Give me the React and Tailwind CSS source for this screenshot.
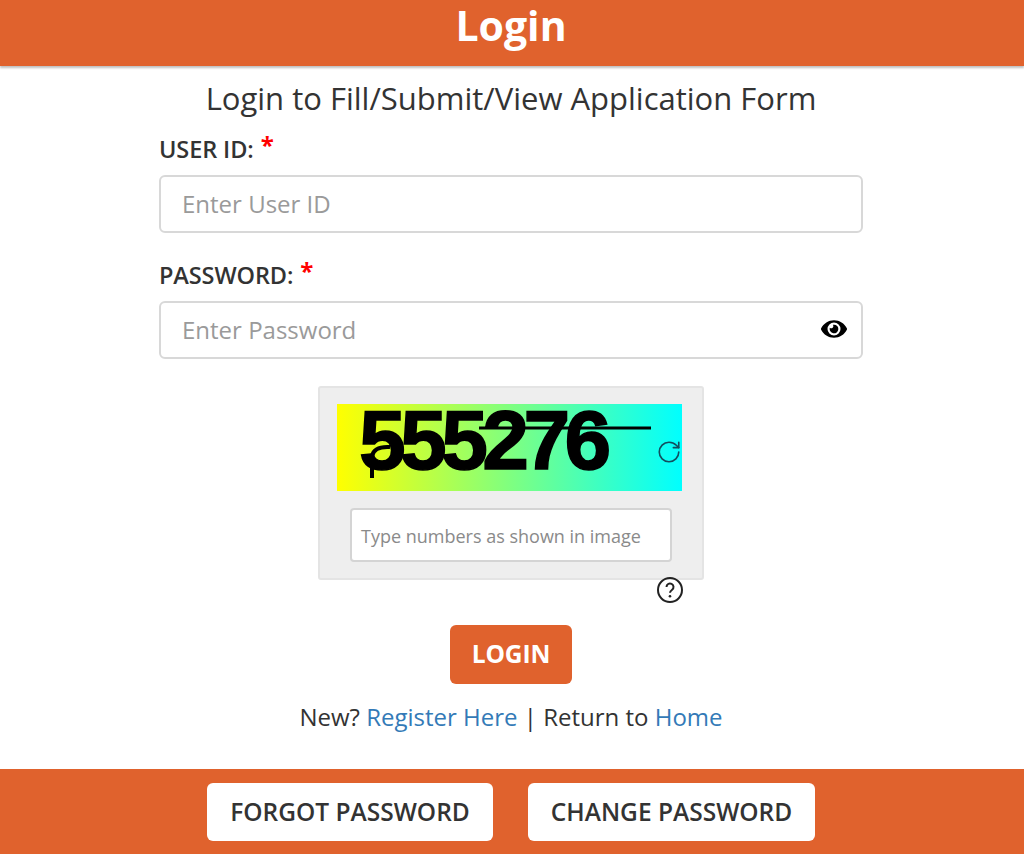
import React from 'react';
import { RotateCw } from 'lucide-react';
import { FaEye } from 'react-icons/fa';

const openSans = { fontFamily: '"Open Sans", sans-serif' };

const Field = ({ label, placeholder, children, className }) => (
  <div className={className}>
    <div className="flex h-[30px] items-center text-[23.5px] font-semibold leading-none tracking-[-0.1px] text-[#333333]">
      {label}:
      <span className="relative top-[-5px] ml-[7px] text-[24px] font-bold text-[#ff0000]">*</span>
    </div>
    <div className="mt-[10px] flex h-[58px] items-center justify-between rounded-[6px] border-2 border-[#d8d8d8] bg-white pl-[21px] pr-[14px] text-[24px] text-[#9a9a9a]">
      <span>{placeholder}</span>
      {children}
    </div>
  </div>
);

export default function App() {
  return (
    <div className="flex h-[854px] w-[1024px] flex-col overflow-hidden bg-white" style={openSans}>
      <header className="flex h-[66px] shrink-0 items-center justify-center bg-[#e0622d] pb-[16px] pr-[2px] shadow-[0_2px_2px_rgba(0,0,0,0.25)]">
        <h1 className="text-[41px] font-bold leading-[50px] text-white">Login</h1>
      </header>

      <main className="flex flex-1 flex-col items-center pr-[2px]">
        <h2 className="mt-[12px] h-[40px] text-[31px] leading-[40px] text-[#333333]">
          Login to Fill/Submit/View Application Form
        </h2>

        <div className="w-[704px]">
          <Field className="mt-[17px]" label="USER ID" placeholder="Enter User ID" />
          <Field className="mt-[28px]" label="PASSWORD" placeholder="Enter Password">
            <FaEye size={26} className="mb-[3px] text-black" />
          </Field>
        </div>

        <section className="mt-[27px] h-[194px] w-[386px] rounded-[3px] border-2 border-[#e4e4e4] bg-[#eeeeee] pl-[17px] pt-[16px]">
          <div className="relative h-[87px] w-[345px] bg-linear-to-r/srgb from-[#ffff00] to-[#00ffff]">
            <span
              className="absolute left-[22px] top-0 text-[84px] font-bold leading-[72px] tracking-[-5.6px] text-black [-webkit-text-stroke:1.5px_black]"
              style={{ fontFamily: '"Liberation Sans", sans-serif' }}
            >
              555276
            </span>
            <svg className="absolute inset-0" width="345" height="87" viewBox="0 0 345 87" fill="none" stroke="black">
              <path d="M142 24 L314 24" strokeWidth="3" />
              <path d="M35 74 L35 52 Q37 42 53 43" strokeWidth="4" />
            </svg>
            <RotateCw size={26} strokeWidth={1.5} className="absolute left-[319px] top-[35px] text-[#134e5e]" />
          </div>
          <div className="ml-[13px] mt-[17px] flex h-[54px] w-[322px] items-center rounded-[4px] border-2 border-[#d4d4d4] bg-white pl-[9px] pt-[3px] text-[18px] text-[#8a8a8a]">
            Type numbers as shown in image
          </div>
        </section>

        <div className="flex h-[24px] w-[704px] justify-end pr-[179px]">
          <svg width="28" height="28" viewBox="0 0 28 28" fill="none" className="mt-[-4px]">
            <circle cx="14" cy="14" r="12" stroke="#222222" strokeWidth="2" />
            <path d="M10.5 11a3.5 3.5 0 1 1 5.6 2.8c-1.2.9-2.1 1.6-2.1 3" stroke="#222222" strokeWidth="2" />
            <circle cx="14" cy="20.3" r="1.3" fill="#222222" />
          </svg>
        </div>

        <button className="mt-[21px] h-[59px] w-[122px] rounded-[6px] bg-[#e0622d] text-[24.5px] font-bold tracking-[-0.1px] text-white">
          LOGIN
        </button>

        <p className="mt-[17px] text-[24px] leading-[32px] text-[#333333]">
          New? <a className="text-[#337ab7]">Register Here</a> | Return to <a className="text-[#337ab7]">Home</a>
        </p>
      </main>

      <footer className="flex h-[85px] shrink-0 justify-center gap-[35px] bg-[#e0622d] pr-[2px] pt-[14px]">
        <button className="h-[58px] w-[286px] rounded-[6px] bg-white pt-[1px] text-[24.5px] font-semibold text-[#333333]">
          FORGOT PASSWORD
        </button>
        <button className="h-[58px] w-[287px] rounded-[6px] bg-white pt-[1px] text-[24.5px] font-semibold text-[#333333]">
          CHANGE PASSWORD
        </button>
      </footer>
    </div>
  );
}
